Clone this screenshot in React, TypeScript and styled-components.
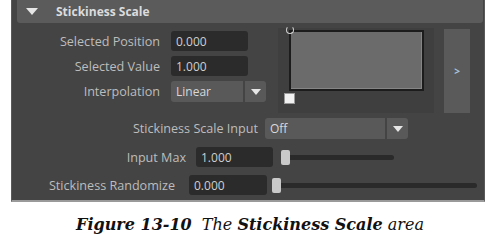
import styled, { createGlobalStyle } from "styled-components";

const Global = createGlobalStyle`
  body {
    margin: 0;
    background: #ffffff;
  }
`;

const Page = styled.div`
  width: 500px;
  height: 245px;
  display: flex;
  flex-direction: column;
`;

const Panel = styled.div`
  margin-left: 11px;
  width: 474px;
  height: 202px;
  background: #444444;
  border-left: 1px solid #5a5a5a;
  border-right: 1px solid #5a5a5a;
  border-bottom: 2px solid #9a9a9a;
  box-sizing: border-box;
  display: flex;
  flex-direction: column;
  font-family: "Open Sans", "Liberation Sans", sans-serif;
  font-size: 12.6px;
  color: #bdbdbd;
`;

const Header = styled.div`
  height: 23px;
  margin: 0 1px 0 5px;
  background: #5b5b5b;
  border-radius: 0 0 3px 3px;
  display: flex;
  align-items: center;
  gap: 18px;
  padding-left: 9px;
  font-weight: 700;
  font-size: 12px;
  color: #dcdcdc;
`;

const Arrow = styled.span<{ $size: number }>`
  width: 0;
  height: 0;
  border-left: ${(p) => p.$size}px solid transparent;
  border-right: ${(p) => p.$size}px solid transparent;
  border-top: ${(p) => Math.round(p.$size * 1.2)}px solid #e6e6e6;
`;

const TopSection = styled.div`
  display: flex;
  margin-top: 5px;
  height: 85px;
`;

const FormGrid = styled.div`
  display: grid;
  grid-template-columns: 148px 96px;
  grid-auto-rows: min-content;
  column-gap: 11px;
  row-gap: 5px;
  padding-top: 3px;
  align-items: center;
`;

const Label = styled.div<{ $width?: number }>`
  text-align: right;
  white-space: nowrap;
  ${(p) => (p.$width ? `width: ${p.$width}px; flex: none;` : "")}
`;

const Field = styled.div<{ $width: number }>`
  width: ${(p) => p.$width}px;
  height: 20px;
  background: #2b2b2b;
  border-radius: 3px;
  box-sizing: border-box;
  padding-left: 5px;
  display: flex;
  align-items: center;
  color: #cfcfcf;
  font-size: 12px;
  flex: none;
`;

const Dropdown = styled.div`
  display: flex;
  gap: 2px;
  height: 21px;
`;

const DropValue = styled.div<{ $width: number }>`
  width: ${(p) => p.$width}px;
  background: #595959;
  border-radius: 3px 0 0 3px;
  padding-left: 5px;
  box-sizing: border-box;
  display: flex;
  align-items: center;
  color: #d8d8d8;
  font-size: 12px;
`;

const DropButton = styled.div`
  width: 21px;
  background: #595959;
  border-radius: 0 3px 3px 0;
  display: flex;
  align-items: center;
  justify-content: center;
`;

const RampArea = styled.div`
  margin-left: 11px;
  width: 156px;
  background: #3f3f3f;
  padding: 2px 0 0 11px;
  box-sizing: border-box;
  display: flex;
  flex-direction: column;
`;

const RampBox = styled.div`
  width: 135px;
  height: 61px;
  box-sizing: border-box;
  border: 2px solid #1c1c1c;
  background: #6b6b6b;
  box-shadow: inset -1px -1px 0 #858585;
  position: relative;
`;

const RampHandle = styled.div`
  position: absolute;
  left: -5px;
  top: -6px;
  width: 6px;
  height: 6px;
  border: 1px solid #d0d0d0;
  border-top-color: transparent;
  border-radius: 50%;
`;

const ValueSquare = styled.div`
  margin: 2px 0 0 -5px;
  width: 11px;
  height: 11px;
  background: #f2f2f2;
  border: 1px solid #9a9a9a;
  box-sizing: border-box;
`;

const ExpandButton = styled.div`
  margin: 1px 0 0 10px;
  width: 26px;
  height: 84px;
  background: #5a5a5a;
  display: flex;
  align-items: center;
  justify-content: center;
  color: #a9c4dc;
  font-size: 10px;
  font-weight: 700;
`;

const Rows = styled.div`
  display: flex;
  flex-direction: column;
`;

const Row = styled.div<{ $gap: number; $top: number }>`
  display: flex;
  align-items: center;
  gap: ${(p) => p.$gap}px;
  margin-top: ${(p) => p.$top}px;
`;

const Slider = styled.div<{ $width: number; $left: number }>`
  width: ${(p) => p.$width}px;
  margin-left: ${(p) => p.$left}px;
  height: 15px;
  position: relative;
  display: flex;
  align-items: center;
`;

const Track = styled.div`
  flex: 1;
  height: 5px;
  background: #2a2a2a;
  border-radius: 3px;
`;

const Thumb = styled.div`
  position: absolute;
  left: 0;
  top: 0;
  width: 9px;
  height: 15px;
  background: #c9c9c9;
  border-radius: 2px;
`;

const Caption = styled.div`
  flex: 1;
  display: flex;
  align-items: center;
  justify-content: center;
  padding-top: 2px;
  font-family: "DejaVu Serif", "Liberation Serif", serif;
  font-style: italic;
  font-size: 16px;
  color: #111111;
  white-space: pre;
`;

export default function App() {
  return (
    <Page>
      <Global />
      <Panel>
        <Header>
          <Arrow $size={6} />
          Stickiness Scale
        </Header>
        <TopSection>
          <FormGrid>
            <Label>Selected Position</Label>
            <Field $width={77}>0.000</Field>
            <Label>Selected Value</Label>
            <Field $width={77}>1.000</Field>
            <Label>Interpolation</Label>
            <Dropdown>
              <DropValue $width={72}>Linear</DropValue>
              <DropButton>
                <Arrow $size={5} />
              </DropButton>
            </Dropdown>
          </FormGrid>
          <RampArea>
            <RampBox>
              <RampHandle />
            </RampBox>
            <ValueSquare />
          </RampArea>
          <ExpandButton>&gt;</ExpandButton>
        </TopSection>
        <Rows>
          <Row $gap={7} $top={5}>
            <Label $width={246}>Stickiness Scale Input</Label>
            <Dropdown>
              <DropValue $width={120}>Off</DropValue>
              <DropButton>
                <Arrow $size={5} />
              </DropButton>
            </Dropdown>
          </Row>
          <Row $gap={10} $top={8}>
            <Label $width={174}>Input Max</Label>
            <Field $width={77}>1.000</Field>
            <Slider $width={113} $left={-2}>
              <Track />
              <Thumb />
            </Slider>
          </Row>
          <Row $gap={14} $top={8}>
            <Label $width={163}>Stickiness Randomize</Label>
            <Field $width={78}>0.000</Field>
            <Slider $width={205} $left={-9}>
              <Track />
              <Thumb />
            </Slider>
          </Row>
        </Rows>
      </Panel>
      <Caption>
        <b>Figure 13-10</b>
        {"  The "}
        <b>Stickiness Scale</b>
        {" area"}
      </Caption>
    </Page>
  );
}
